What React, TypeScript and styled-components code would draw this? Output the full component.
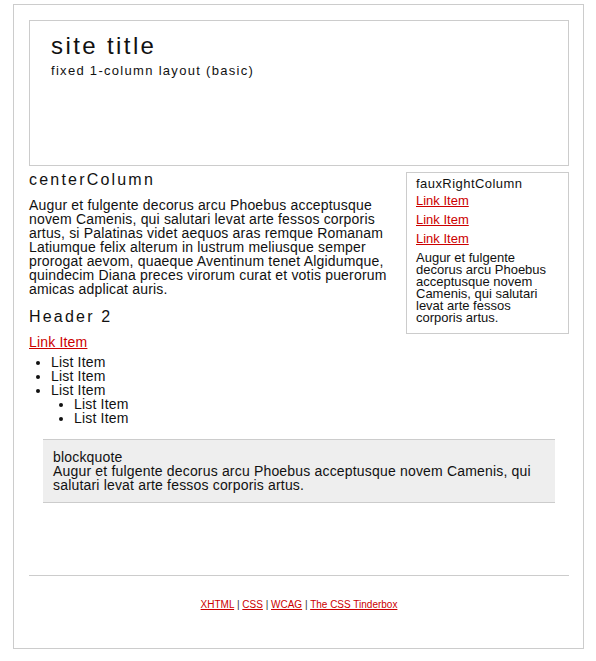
import React from "react";
import styled, { createGlobalStyle } from "styled-components";

const GlobalStyle = createGlobalStyle`
  html, body { margin: 0; padding: 0; background: #fff; }
  body { font-family: "Liberation Sans", Arial, sans-serif; color: #111; }
`;

const Page = styled.div`
  box-sizing: border-box;
  width: 571px;
  margin: 4px 0 0 13px;
  padding: 15px 14px 15px 15px;
  border: 1px solid #ccc;
`;

const Header = styled.header`
  box-sizing: border-box;
  height: 146px;
  border: 1px solid #ccc;
  padding: 11px 21px;
`;

const SiteTitle = styled.h1`
  margin: 0;
  font-size: 24px;
  line-height: 28px;
  font-weight: normal;
  letter-spacing: 2.4px;
`;

const Tagline = styled.p`
  margin: 3px 0 0;
  font-size: 13px;
  line-height: 16px;
  letter-spacing: 1.3px;
`;

const Main = styled.div`
  display: flow-root;
`;

const RightColumn = styled.aside`
  float: right;
  box-sizing: border-box;
  width: 163px;
  margin: 6px 0 0 10px;
  border: 1px solid #ccc;
  padding: 4px 9px 9px;
`;

const RightTitle = styled.h4`
  margin: 0;
  font-size: 13px;
  line-height: 14px;
  font-weight: normal;
  letter-spacing: 0.45px;
`;

const LinkList = styled.div`
  display: flex;
  flex-direction: column;
  align-items: flex-start;
  gap: 5px;
  margin-top: 3px;
`;

const Link = styled.a<{ $size?: number }>`
  color: #cc0000;
  text-decoration: underline;
  font-size: ${(p) => p.$size ?? 14}px;
  line-height: 14px;
`;

const SideText = styled.p`
  margin: 6px 0 0;
  font-size: 13px;
  line-height: 12px;
`;

const SectionHeading = styled.h2<{ $gap: number }>`
  margin: ${(p) => p.$gap}px 0 0;
  font-size: 16px;
  line-height: 20px;
  font-weight: normal;
  letter-spacing: 2.2px;
`;

const Para = styled.p<{ $gap: number }>`
  margin: ${(p) => p.$gap}px 0 0;
  font-size: 14px;
  line-height: 14px;
  letter-spacing: 0.18px;
`;

const List = styled.ul<{ $nested?: boolean }>`
  margin: ${(p) => (p.$nested ? 0 : 6)}px 0 0;
  padding-left: ${(p) => (p.$nested ? 23 : 22)}px;
  font-size: 14px;
  line-height: 14px;
  letter-spacing: 0.18px;
  list-style: disc;
`;

const Quote = styled.blockquote`
  margin: 14px 14px 0;
  padding: 10px;
  background: #eee;
  border-top: 1px solid #ccc;
  border-bottom: 1px solid #ccc;
  font-size: 14px;
  line-height: 14px;
  letter-spacing: 0.18px;
`;

const Footer = styled.footer`
  margin-top: 72px;
  border-top: 1px solid #ccc;
  padding: 23px 0 22px;
  text-align: center;
  font-size: 10px;
  line-height: 12px;
`;

const Sep = styled.span`
  color: #333;
`;

const FootLink = styled.a`
  color: #cc0000;
  text-decoration: underline;
`;

export default function App() {
  return (
    <>
      <GlobalStyle />
      <Page>
        <Header>
          <SiteTitle>site title</SiteTitle>
          <Tagline>fixed 1-column layout (basic)</Tagline>
        </Header>
        <Main>
          <RightColumn>
            <RightTitle>fauxRightColumn</RightTitle>
            <LinkList>
              <Link href="#" $size={13}>Link Item</Link>
              <Link href="#" $size={13}>Link Item</Link>
              <Link href="#" $size={13}>Link Item</Link>
            </LinkList>
            <SideText>
              Augur et fulgente decorus arcu Phoebus acceptusque novem Camenis, qui salutari levat arte fessos corporis artus.
            </SideText>
          </RightColumn>
          <SectionHeading $gap={4}>centerColumn</SectionHeading>
          <Para $gap={8}>
            Augur et fulgente decorus arcu Phoebus acceptusque novem Camenis, qui salutari levat arte fessos corporis artus, si Palatinas videt aequos aras remque Romanam Latiumque felix alterum in lustrum meliusque semper prorogat aevom, quaeque Aventinum tenet Algidumque, quindecim Diana preces virorum curat et votis puerorum amicas adplicat auris.
          </Para>
          <SectionHeading $gap={11}>Header 2</SectionHeading>
          <Para $gap={8}>
            <Link href="#">Link Item</Link>
          </Para>
          <List>
            <li>List Item</li>
            <li>List Item</li>
            <li>
              List Item
              <List $nested>
                <li>List Item</li>
                <li>List Item</li>
              </List>
            </li>
          </List>
          <Quote>
            blockquote
            <br />
            Augur et fulgente decorus arcu Phoebus acceptusque novem Camenis, qui salutari levat arte fessos corporis artus.
          </Quote>
        </Main>
        <Footer>
          <FootLink href="#">XHTML</FootLink> <Sep>|</Sep> <FootLink href="#">CSS</FootLink> <Sep>|</Sep>{" "}
          <FootLink href="#">WCAG</FootLink> <Sep>|</Sep> <FootLink href="#">The CSS Tinderbox</FootLink>
        </Footer>
      </Page>
    </>
  );
}
